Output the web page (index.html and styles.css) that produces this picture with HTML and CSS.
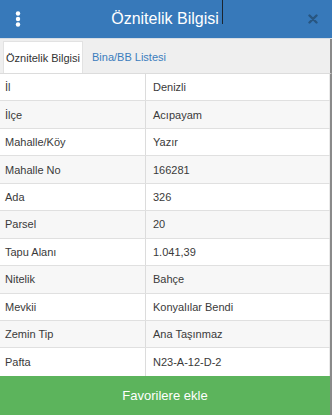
FILE: index.html
```html
<!DOCTYPE html>
<html>
<head>
<meta charset="utf-8">
<link rel="stylesheet" href="styles.css">
</head>
<body>
<div class="app">
  <header class="header">
    <span class="menu">
      <svg width="6" height="16" viewBox="0 0 6 16"><circle cx="3" cy="2.5" r="2.2" fill="#fff"/><circle cx="3" cy="8" r="2.2" fill="#fff"/><circle cx="3" cy="13.5" r="2.2" fill="#fff"/></svg>
    </span>
    <h1 class="title">Öznitelik Bilgisi</h1>
    <span class="cursor-line"></span>
    <span class="close">
      <svg width="10" height="10" viewBox="0 0 10 10"><path d="M1.5 1.5 L8.5 8.5 M8.5 1.5 L1.5 8.5" stroke="#285681" stroke-width="2.4" stroke-linecap="round"/></svg>
    </span>
  </header>
  <nav class="tabs">
    <span class="tab active">Öznitelik Bilgisi</span>
    <span class="tab link">Bina/BB Listesi</span>
  </nav>
  <div class="table">
    <div class="row"><div class="cell key">İl</div><div class="cell val">Denizli</div></div>
    <div class="row"><div class="cell key">İlçe</div><div class="cell val">Acıpayam</div></div>
    <div class="row"><div class="cell key">Mahalle/Köy</div><div class="cell val">Yazır</div></div>
    <div class="row"><div class="cell key">Mahalle No</div><div class="cell val">166281</div></div>
    <div class="row"><div class="cell key">Ada</div><div class="cell val">326</div></div>
    <div class="row"><div class="cell key">Parsel</div><div class="cell val">20</div></div>
    <div class="row"><div class="cell key">Tapu Alanı</div><div class="cell val">1.041,39</div></div>
    <div class="row"><div class="cell key">Nitelik</div><div class="cell val">Bahçe</div></div>
    <div class="row"><div class="cell key">Mevkii</div><div class="cell val">Konyalılar Bendi</div></div>
    <div class="row"><div class="cell key">Zemin Tip</div><div class="cell val">Ana Taşınmaz</div></div>
    <div class="row"><div class="cell key">Pafta</div><div class="cell val">N23-A-12-D-2</div></div>
  </div>
  <button class="fav">Favorilere ekle</button>
</div>
</body>
</html>
```
FILE: styles.css
```css
html, body {
  margin: 0;
  padding: 0;
  background: #fff;
}
body {
  font-family: "Liberation Sans", Arial, sans-serif;
  color: #3a3a3a;
  width: 332px;
  height: 415px;
  overflow: hidden;
}
.app {
  display: flex;
  flex-direction: column;
  height: 415px;
}
.header {
  position: relative;
  height: 38px;
  background: #3779ba;
  display: flex;
  align-items: center;
  justify-content: center;
  border-bottom: 1px solid #d6dde4;
}
.menu {
  position: absolute;
  left: 15px;
  top: 11px;
  line-height: 0;
}
.title {
  margin: 0 0 0 -2px;
  font-size: 16px;
  font-weight: normal;
  color: #fff;
}
.cursor-line {
  position: absolute;
  left: 222px;
  top: 0;
  width: 1px;
  height: 24px;
  background: #1b2530;
}
.close {
  position: absolute;
  left: 308px;
  top: 14px;
  line-height: 0;
}
.tabs {
  height: 34px;
  background: #efefef;
  display: flex;
  align-items: flex-end;
  padding-left: 3px;
  border-right: 2px solid #8a8a8a;
}
.tab {
  height: 32px;
  display: flex;
  align-items: center;
  font-size: 11px;
}
.tab.active {
  background: #fff;
  color: #333;
  border: 1px solid #e2e2e2;
  border-bottom: none;
  box-sizing: border-box;
  width: 80px;
  justify-content: center;
}
.tab.link {
  color: #3b7dbd;
  padding-left: 9px;
}
.table {
  border-top: 1px solid #dcdcdc;
  border-right: 2px solid #8a8a8a;
  display: flex;
  flex-direction: column;
}
.row {
  display: grid;
  grid-template-columns: 146px 1fr;
  height: 27.45px;
  box-sizing: border-box;
  border-bottom: 1px solid #e0e0e0;
  font-size: 11px;
}
.row:nth-child(even) {
  background: #f7f7f7;
}
.row:last-child {
  border-bottom: none;
}
.cell {
  display: flex;
  align-items: center;
}
.key {
  padding-left: 5px;
  border-right: 1px solid #dcdcdc;
}
.val {
  padding-left: 7px;
  border-right: 1px solid #eaeaea;
}
.fav {
  flex: 1;
  margin: 0;
  border: none;
  border-right: 2px solid #8a8a8a;
  background: #5cb45c;
  color: #fff;
  font-family: "Liberation Sans", Arial, sans-serif;
  font-size: 13px;
  padding: 0;
  text-align: center;
}
```
